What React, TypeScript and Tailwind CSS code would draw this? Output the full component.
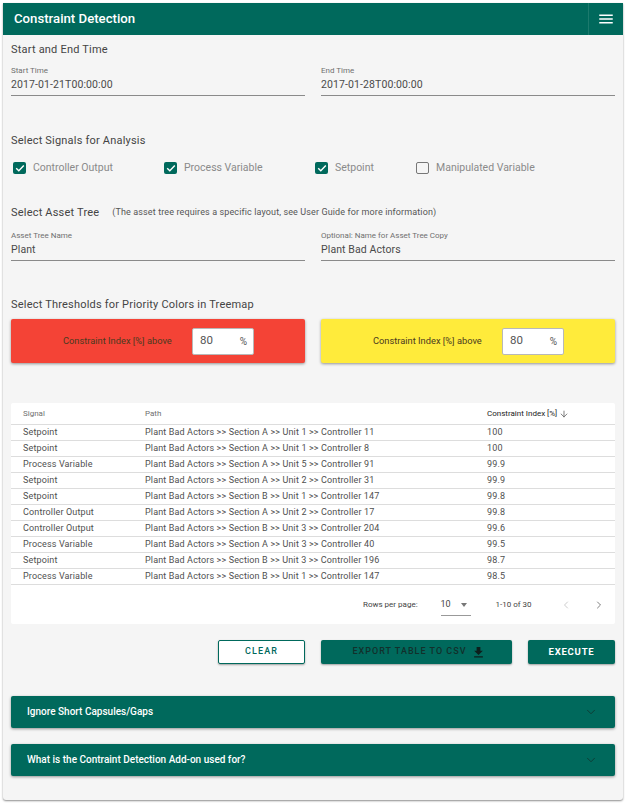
import { ArrowDown, ChevronDown, ChevronLeft, ChevronRight } from "lucide-react";

const rows = [
  ["Setpoint", "Plant Bad Actors >> Section A >> Unit 1 >> Controller 11", "100"],
  ["Setpoint", "Plant Bad Actors >> Section A >> Unit 1 >> Controller 8", "100"],
  ["Process Variable", "Plant Bad Actors >> Section A >> Unit 5 >> Controller 91", "99.9"],
  ["Setpoint", "Plant Bad Actors >> Section A >> Unit 2 >> Controller 31", "99.9"],
  ["Setpoint", "Plant Bad Actors >> Section B >> Unit 1 >> Controller 147", "99.8"],
  ["Controller Output", "Plant Bad Actors >> Section A >> Unit 2 >> Controller 17", "99.8"],
  ["Controller Output", "Plant Bad Actors >> Section B >> Unit 3 >> Controller 204", "99.6"],
  ["Process Variable", "Plant Bad Actors >> Section A >> Unit 3 >> Controller 40", "99.5"],
  ["Setpoint", "Plant Bad Actors >> Section B >> Unit 3 >> Controller 196", "98.7"],
  ["Process Variable", "Plant Bad Actors >> Section B >> Unit 1 >> Controller 147", "98.5"],
];

function Field({ label, value }: { label: string; value: string }) {
  return (
    <div className="h-[32px] border-b border-[#8a8a8a]">
      <div className="h-[14px] text-[8px] leading-[14px] text-[#6f6f6f]">{label}</div>
      <div className="h-[13px] text-[10.5px] leading-[13px] tracking-[0.1px] text-[#4a4a4a]">{value}</div>
    </div>
  );
}

function Check({ label, checked, width }: { label: string; checked?: boolean; width: string }) {
  return (
    <div className={`flex items-center ${width}`}>
      <div className={`ml-[2px] mr-[7px] flex h-[12px] w-[13px] items-center justify-center rounded-[2px] ${checked ? "bg-[#00695c]" : "border border-[#777777]"}`}>
        {checked && (
          <svg viewBox="0 0 12 12" className="h-[12px] w-[12px]">
            <path d="M2.2 6.2 L4.8 8.8 L9.8 3.4" fill="none" stroke="#ffffff" strokeWidth="1.4" />
          </svg>
        )}
      </div>
      <span className="text-[10.5px] text-[#8a8a8a]">{label}</span>
    </div>
  );
}

function Threshold({ color }: { color: string }) {
  return (
    <div className={`flex h-[44px] items-center rounded-[2px] pl-[52px] shadow-[0_1px_3px_rgba(0,0,0,0.4)] ${color}`}>
      <span className="w-[129px] whitespace-nowrap text-[9.3px] text-[#4a3a20]">Constraint Index [%] above</span>
      <div className="flex h-[27px] w-[62px] items-center justify-between rounded-[2px] border border-[#b8b8b8] bg-white pl-[7px] pr-[6px] text-[11.5px] text-[#555555]">
        <span>80</span>
        <span className="text-[10px]">%</span>
      </div>
    </div>
  );
}

function Accordion({ title }: { title: string }) {
  return (
    <div className="flex h-[32px] items-center justify-between rounded-[2px] bg-[#00695c] pl-[16px] pr-[17px] shadow-[0_1px_3px_rgba(0,0,0,0.4)]">
      <span className="pb-[1px] text-[10px] font-medium text-white">{title}</span>
      <ChevronDown className="h-[14px] w-[14px] text-[#0e3a33]" strokeWidth={1.6} />
    </div>
  );
}

export default function App() {
  return (
    <div className="h-[803px] w-[627px] bg-white pl-[3px] pr-[4px] pt-[3px] font-['Roboto',sans-serif]">
      <div className="h-[797px] rounded-b-[3px] bg-[#f5f5f5] shadow-[0_1px_2px_rgba(0,0,0,0.45)]">
        <header className="flex h-[32px] items-center justify-between bg-[#00695c] pl-[11px]">
          <h1 className="text-[13.2px] font-medium text-white">Constraint Detection</h1>
          <div className="flex h-full w-[35px] items-center justify-center border-l border-[#1c7a6d]">
            <svg viewBox="0 0 24 24" className="h-[18px] w-[18px]" fill="#ffffff">
              <path d="M3 18h18v-2H3v2zm0-5h18v-2H3v2zm0-7v2h18V6H3z" />
            </svg>
          </div>
        </header>

        <main className="px-[8px]">
          <h2 className="mt-[7px] h-[16px] text-[11px] leading-[16px] tracking-[0.2px] text-[#444444]">Start and End Time</h2>
          <div className="mt-[6px] grid grid-cols-2 gap-[16px]">
            <Field label="Start Time" value="2017-01-21T00:00:00" />
            <Field label="End Time" value="2017-01-28T00:00:00" />
          </div>

          <h2 className="mt-[37px] h-[16px] text-[11px] leading-[16px] tracking-[0.2px] text-[#444444]">Select Signals for Analysis</h2>
          <div className="mt-[11px] flex h-[16px]">
            <Check label="Controller Output" checked width="w-[151px]" />
            <Check label="Process Variable" checked width="w-[151px]" />
            <Check label="Setpoint" checked width="w-[101px]" />
            <Check label="Manipulated Variable" width="w-[180px]" />
          </div>

          <div className="mt-[29px] flex h-[16px] items-center">
            <h2 className="text-[11px] leading-[16px] tracking-[0.2px] text-[#444444]">Select Asset Tree</h2>
            <span className="ml-[13px] text-[9px] tracking-[0.12px] text-[#555555]">(The asset tree requires a specific layout, see User Guide for more information)</span>
          </div>
          <div className="mt-[8px] grid grid-cols-2 gap-[16px]">
            <Field label="Asset Tree Name" value="Plant" />
            <Field label="Optional: Name for Asset Tree Copy" value="Plant Bad Actors" />
          </div>

          <h2 className="mt-[36px] h-[16px] text-[11px] leading-[16px] tracking-[0.2px] text-[#444444]">Select Thresholds for Priority Colors in Treemap</h2>
          <div className="mt-[6px] grid grid-cols-2 gap-[16px]">
            <Threshold color="bg-[#f44336]" />
            <Threshold color="bg-[#ffeb3b]" />
          </div>

          <section className="mt-[40px] h-[221px] rounded-[2px] bg-white">
            <table className="w-full table-fixed border-collapse text-[9px] text-[#4f4f4f]">
              <thead>
                <tr className="h-[21px] border-b border-[#dddddd] text-[8px] text-[#6f6f6f]">
                  <th className="w-[122px] pl-[12px] pt-[1px] text-left font-normal">Signal</th>
                  <th className="w-[342px] pl-[12px] pt-[1px] text-left font-normal">Path</th>
                  <th className="pl-[12px] pt-[1px] text-left font-normal text-[#222222]">
                    <span className="inline-flex items-center gap-[2px]">
                      Constraint Index [%]
                      <ArrowDown className="h-[10px] w-[10px] text-[#555555]" strokeWidth={1.8} />
                    </span>
                  </th>
                </tr>
              </thead>
              <tbody>
                {rows.map((r, i) => (
                  <tr key={i} className="h-[16px] border-b border-[#dddddd]">
                    <td className="pl-[12px] pt-[1px] tracking-[0.14px]">{r[0]}</td>
                    <td className="pl-[12px] pt-[1px] tracking-[0.14px]">{r[1]}</td>
                    <td className="pl-[12px] pt-[1px] tracking-[0.14px]">{r[2]}</td>
                  </tr>
                ))}
              </tbody>
            </table>
            <div className="mt-[9px] flex h-[22px] items-center text-[8px] text-[#444444]">
              <span className="ml-[352px]">Rows per page:</span>
              <div className="ml-[23px] flex h-[22px] w-[30px] items-center justify-between border-b border-[#999999] pt-[1px] text-[9px]">
                <span>10</span>
                <span className="mr-[4px] h-0 w-0 border-x-[3.5px] border-t-[4px] border-x-transparent border-t-[#777777]" />
              </div>
              <span className="ml-[25px]">1-10 of 30</span>
              <ChevronLeft className="ml-[28px] h-[12px] w-[12px] text-[#bbbbbb]" strokeWidth={1.5} />
              <ChevronRight className="ml-[21px] h-[12px] w-[12px] text-[#555555]" strokeWidth={1.5} />
            </div>
          </section>

          <div className="mt-[16px] flex justify-end gap-[16px]">
            <button className="h-[24px] w-[87px] rounded-[2px] border border-[#00695c] bg-white text-[9px] font-medium tracking-[1.1px] text-[#00695c] shadow-[0_1px_2px_rgba(0,0,0,0.35)]">CLEAR</button>
            <button className="flex h-[24px] w-[191px] items-center justify-center gap-[4px] rounded-[2px] bg-[#00695c] pl-[5px] text-[9px] font-medium tracking-[1px] text-[#12302b] shadow-[0_1px_2px_rgba(0,0,0,0.35)]">
              EXPORT TABLE TO CSV
              <svg viewBox="0 0 24 24" className="h-[15px] w-[15px]" fill="#0d1f1c">
                <path d="M19 9h-4V3H9v6H5l7 7 7-7zM5 18v2h14v-2H5z" />
              </svg>
            </button>
            <button className="h-[24px] w-[87px] rounded-[2px] bg-[#00695c] text-[9.5px] font-bold tracking-[0.8px] text-white shadow-[0_1px_2px_rgba(0,0,0,0.35)]">EXECUTE</button>
          </div>

          <div className="mt-[32px] flex flex-col gap-[16px]">
            <Accordion title="Ignore Short Capsules/Gaps" />
            <Accordion title="What is the Contraint Detection Add-on used for?" />
          </div>
        </main>
      </div>
    </div>
  );
}
